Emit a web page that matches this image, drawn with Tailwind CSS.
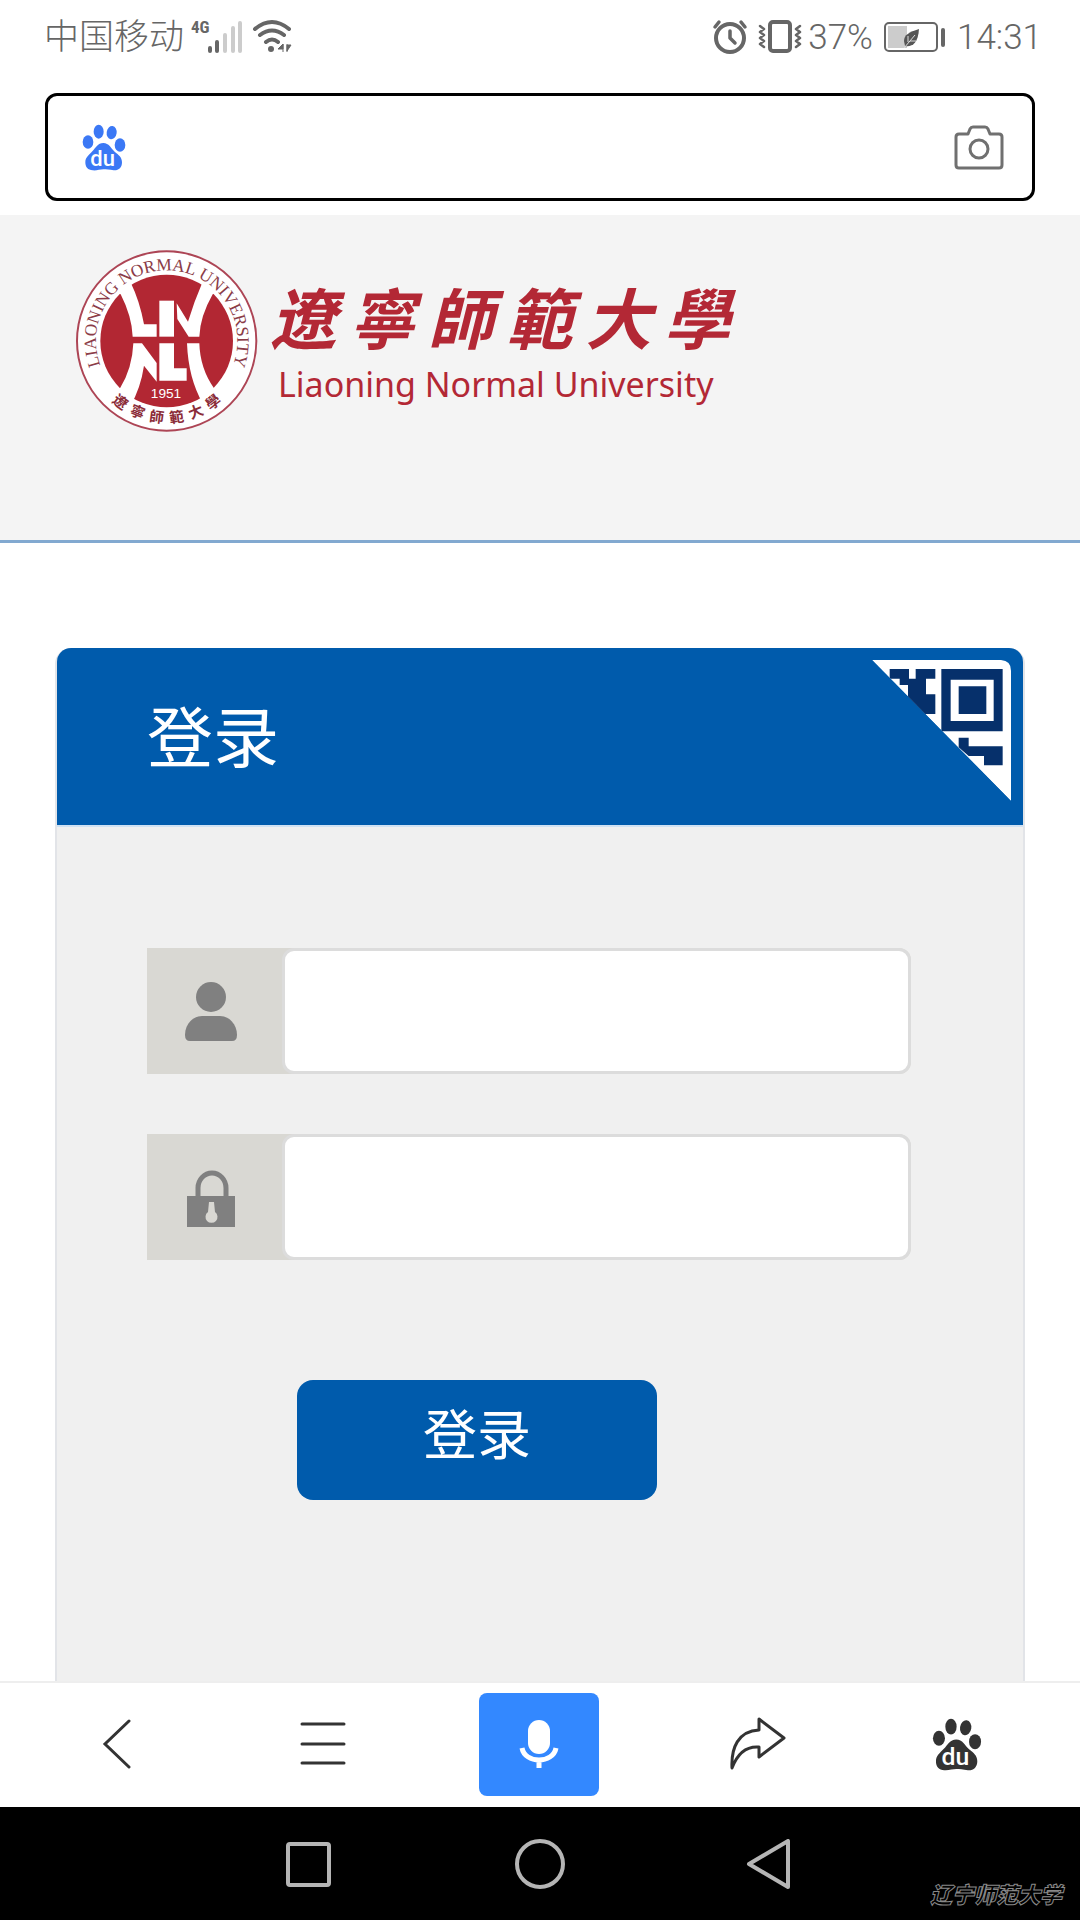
<!DOCTYPE html>
<html lang="zh-CN">
<head>
<meta charset="utf-8">
<meta name="viewport" content="width=device-width, initial-scale=1">
<title>辽宁师范大学 登录</title>
<script src="https://cdn.jsdelivr.net/npm/@tailwindcss/browser@4"></script>
</head>
<body class="flex min-h-screen flex-col bg-white font-['Roboto','Noto_Sans_CJK_SC',sans-serif] text-[#666]">

<svg class="hidden" aria-hidden="true">
  <symbol id="paw" viewBox="156 131 132 141">
    <g fill="currentColor">
      <ellipse cx="174" cy="185" rx="16" ry="20"/>
      <ellipse cx="206" cy="154" rx="15" ry="21"/>
      <ellipse cx="245" cy="157" rx="15" ry="20" transform="rotate(8 245 157)"/>
      <ellipse cx="270" cy="194" rx="16" ry="20"/>
      <path d="M220 188C237 188 243 204 254 214C266 224 276 230 276 246C276 262 266 271 251 270C238 268 229 267 220 267C211 267 200 271 188 270C174 269 166 261 166 246C166 231 176 225 187 213C197 203 203 188 220 188Z"/>
    </g>
    <text x="218" y="257" text-anchor="middle" font-family="Roboto, sans-serif" font-weight="500" font-size="66" fill="#fff">du</text>
  </symbol>
</svg>

<!-- Status bar -->
<header class="flex h-[76px] items-center justify-between pr-[38px] pl-11 text-[35px] font-light">
  <div class="flex items-center">
    <span>中国移动</span>
    <svg class="ml-1.5 h-10 w-28" viewBox="0 0 112 40" fill="none" aria-hidden="true">
      <text x="1" y="15" font-family="Roboto Condensed, Liberation Sans Narrow, Roboto, sans-serif" font-weight="700" font-size="17" fill="#666">4G</text>
      <g stroke-width="4" stroke-linecap="round">
        <path stroke="#666" d="M20 30v3M27 24v9"/>
        <path stroke="#ccc" d="M35 17v16M43 10v23M50 5v28"/>
      </g>
      <g stroke="#666" stroke-width="4" stroke-linecap="round">
        <path d="M65 11q17-14 34 0M70 17q12-9 24 0M76 24q6-5 12 0"/>
      </g>
      <circle cx="81" cy="31" r="3" fill="#666"/>
      <path d="M93 26v8M88 31l5-5v5zM97 26v8M97 33l4-6h-4z" fill="#666" stroke="#666" stroke-width="1"/>
    </svg>
  </div>
  <div class="flex items-center">
    <svg class="mr-1.5 h-10 w-[90px]" viewBox="0 0 90 40" fill="none" stroke="#666" stroke-linecap="round" stroke-linejoin="round" aria-hidden="true">
      <circle cx="18" cy="20" r="14" stroke-width="4"/>
      <path stroke-width="3.5" d="M18 13v7l5 5"/>
      <path stroke-width="3.5" d="M3 9l4-5M33 9l-4-5"/>
      <rect x="58" y="4" width="20" height="29" rx="3" stroke-width="4"/>
      <path stroke-width="2.5" d="M48 8l4 3-4 3 4 3-4 3 4 3-4 3 4 3M88 8l-4 3 4 3-4 3 4 3-4 3 4 3-4 3"/>
    </svg>
    <span>37%</span>
    <svg class="mx-2.5 h-8 w-[64px]" viewBox="0 0 64 32" aria-hidden="true">
      <rect x="2" y="1" width="52" height="28" rx="4" fill="#fff" stroke="#666" stroke-width="2"/>
      <rect x="5" y="4" width="19" height="22" fill="#ccc"/>
      <path d="M36 7C26 10 21 13 21 19l1 5c7 1 13-2 14-17z" fill="#555"/>
      <path d="M21 26l11-13M25 20v-6M27 19h6" stroke="#ddd" stroke-width="1"/>
      <rect x="58" y="6" width="4" height="19" rx="2" fill="#666"/>
    </svg>
    <time>14:31</time>
  </div>
</header>

<!-- Search box -->
<form class="px-[45px] pt-[17px] pb-[14px]">
  <div class="flex h-[108px] items-center rounded-xl border-3 border-black pr-7 pl-[34px]">
    <svg class="h-[47px] w-11 text-[#3b78f5]" aria-hidden="true"><use href="#paw"/></svg>
    <input type="search" aria-label="搜索" class="mx-5 h-full min-w-0 flex-1 text-4xl outline-none">
    <button type="button" aria-label="拍照搜索">
      <svg class="h-[46px] w-[50px]" viewBox="0 0 50 46" fill="none" stroke="#707070" stroke-width="3" stroke-linejoin="round" aria-hidden="true">
        <path d="M5 10h9l2-5q1-2 3-2h12q2 0 3 2l2 5h9q3 0 3 3v28q0 3-3 3H5q-3 0-3-3V13q0-3 3-3z"/>
        <circle cx="25" cy="25" r="9"/>
      </svg>
    </button>
  </div>
</form>

<main class="flex flex-1 flex-col">
  <!-- University banner -->
  <section class="flex h-[328px] items-start border-b-3 border-[#82a9d0] bg-[#f4f4f4] pt-5 pl-[60px]">
    <svg class="size-[210px] shrink-0" viewBox="0 0 630 630" role="img" aria-label="辽宁师范大学校徽">
      <defs>
        <path id="ring-top" d="M320 530A212 212 0 0 1 320 106A212 212 0 0 1 320 530"/>
        <path id="ring-bottom" d="M74 318A246 246 0 0 0 566 318"/>
      </defs>
      <circle cx="320" cy="318" r="269" fill="#fff" stroke="#ad4555" stroke-width="6"/>
      <circle cx="320" cy="318" r="199" fill="#b22733"/>
      <g fill="#fff">
        <path d="M182 178Q216 245 218 305H290V268H252Q240 200 211 140L170 120L150 165Z"/>
        <path d="M298 197H342V305H298Z"/>
        <path d="M350 205L384 260Q402 200 428 140L470 125L486 165L458 178Q420 245 418 305H386L352 252Z"/>
        <path d="M220 325H246L290 384V440L252 392Q242 460 210 515L160 500L150 465L180 460Q217 400 220 325Z"/>
        <path d="M298 325H342V400H380V437H298Z"/>
        <path d="M381 325H418Q420 400 462 460L486 480L450 520L428 505Q385 430 381 325Z"/>
        <text x="318" y="489" text-anchor="middle" font-family="Liberation Sans, sans-serif" font-size="41">1951</text>
      </g>
      <text font-family="Liberation Serif, serif" font-size="52" fill="#8b3c48" text-anchor="middle"><textPath href="#ring-top" startOffset="50%">LIAONING NORMAL UNIVERSITY</textPath></text>
      <text font-family="Noto Sans CJK TC, sans-serif" font-weight="700" font-size="44" fill="#8b2c38" text-anchor="middle"><textPath href="#ring-bottom" startOffset="50%">遼&#160; 寧&#160; 師&#160; 範&#160; 大&#160; 學</textPath></text>
    </svg>
    <div class="w-[460px] pt-8 text-[#b32835]">
      <h1 class="flex justify-between font-['Noto_Sans_CJK_TC',sans-serif] text-[66px] leading-[96px] font-bold italic">
        <span>遼</span><span>寧</span><span>師</span><span>範</span><span>大</span><span>學</span>
      </h1>
      <p class="pl-2 font-['Noto_Sans',sans-serif] text-[34px] leading-[42px] whitespace-nowrap">Liaoning Normal University</p>
    </div>
  </section>

  <!-- Login card -->
  <section class="mx-[55px] mt-[105px] flex flex-1 flex-col rounded-t-2xl border-x-2 border-[#e2e4e8] bg-[#f0f0f0]">
    <div class="relative flex h-[177px] items-center rounded-t-[14px] bg-[#005bac] pt-1.5 pl-[90px]">
      <h2 class="text-[66px] leading-[80px] text-white">登录</h2>
      <svg class="absolute top-3 right-3 h-[141px] w-[139px]" viewBox="97 90 417 423" role="img" aria-label="扫码登录">
        <defs><clipPath id="corner"><path d="M97 90H484Q514 92 514 122V513Z"/></clipPath></defs>
        <g clip-path="url(#corner)">
          <path fill="#fff" d="M97 90H514V513Z"/>
          <g fill="#06306b">
            <path fill-rule="evenodd" d="M305 117H489V304H305ZM333 149V273H462V149Z"/>
            <path d="M357 169H440V252H357Z"/>
            <path d="M150 117H208V146H228V117H287V146H259V193H287V252H250L205 205V165H180V146H150Z"/>
            <path d="M357 323H387V349H489V406H433V378H387L357 352Z"/>
          </g>
        </g>
      </svg>
    </div>
    <form class="flex flex-col border-t-2 border-[#cfe1f3] pt-[121px] pr-[112px] pb-[181px] pl-[90px]">
      <div class="flex h-[126px] rounded-r-xl bg-[#d9d8d3]">
        <label for="user" class="flex w-[135px] shrink-0 items-center justify-center pr-2">
          <svg class="h-[60px] w-[54px]" viewBox="0 0 54 60" fill="#808080" role="img" aria-label="用户名">
            <circle cx="27" cy="16" r="15"/>
            <path d="M1 54C1 42 10 35 18 35H36C45 35 53 43 53 54Q53 60 48 60H6Q1 60 1 54Z"/>
          </svg>
        </label>
        <input id="user" type="text" class="min-w-0 flex-1 rounded-xl border-3 border-[#dcdcdc] bg-white px-5 text-4xl outline-none">
      </div>
      <div class="mt-[60px] flex h-[126px] rounded-r-xl bg-[#d9d8d3]">
        <label for="pass" class="flex w-[135px] shrink-0 items-center justify-center pt-1 pr-2">
          <svg class="h-[58px] w-[50px]" viewBox="0 0 50 58" role="img" aria-label="密码">
            <path d="M12 28V18a14 15 0 0 1 28 0V28" fill="none" stroke="#808080" stroke-width="5"/>
            <path d="M1 26H49V57H1Z" fill="#808080"/>
            <path d="M23 32h5l1 10a6 6 0 1 1-7 0z" fill="#d9d8d3"/>
          </svg>
        </label>
        <input id="pass" type="password" class="min-w-0 flex-1 rounded-xl border-3 border-[#dcdcdc] bg-white px-5 text-4xl outline-none">
      </div>
      <button type="button" class="mt-[120px] ml-[150px] h-[120px] w-[360px] rounded-2xl bg-[#005bac] pb-1.5 text-[54px] leading-[64px] text-white">登录</button>
    </form>
  </section>
</main>

<!-- Browser toolbar -->
<nav class="grid h-[126px] grid-cols-[234fr_178fr_253fr_186fr_212fr_17fr] items-center border-t-2 border-[#eee] bg-white pb-0.5 text-[#333]">
  <button type="button" aria-label="返回" class="flex justify-center">
    <svg class="h-[50px] w-[30px]" viewBox="0 0 30 50" fill="none" stroke="currentColor" stroke-width="3" stroke-linecap="round"><path d="M27 2L3 25L27 48"/></svg>
  </button>
  <button type="button" aria-label="菜单" class="flex justify-center">
    <svg class="h-11 w-[46px]" viewBox="0 0 46 44" fill="none" stroke="currentColor" stroke-width="3" stroke-linecap="round"><path d="M2 2H44M2 22H44M2 41H44"/></svg>
  </button>
  <button type="button" aria-label="语音搜索" class="flex h-[103px] w-[120px] items-center justify-center justify-self-center rounded-lg bg-[#3388ff]">
    <svg class="h-12 w-10" viewBox="0 0 40 48" fill="none" stroke="#fff">
      <rect x="9" y="0" width="22" height="34" rx="11" fill="#fff" stroke="none"/>
      <path d="M3 28C6 44 34 44 37 28M20 40V48" stroke-width="5"/>
    </svg>
  </button>
  <button type="button" aria-label="分享" class="flex justify-center">
    <svg class="h-[54px] w-14" viewBox="0 0 56 54" fill="none" stroke="currentColor" stroke-width="3" stroke-linejoin="round"><path d="M29 2L54 21L29 40V30C17 29 8 35 2 51C1 31 8 14 29 13Z"/></svg>
  </button>
  <button type="button" aria-label="百度首页" class="flex justify-center">
    <svg class="h-[53px] w-[50px]"><use href="#paw"/></svg>
  </button>
</nav>

<!-- System navigation -->
<footer class="relative flex h-[113px] items-center justify-center gap-[180px] bg-black text-[#b5b5b5]">
  <button type="button" aria-label="最近任务">
    <svg class="size-[50px]" viewBox="0 0 50 50" fill="none" stroke="currentColor" stroke-width="4"><rect x="3" y="5" width="41" height="41" rx="2"/></svg>
  </button>
  <button type="button" aria-label="主屏幕">
    <svg class="size-[50px]" viewBox="0 0 50 50" fill="none" stroke="currentColor" stroke-width="4"><circle cx="25" cy="25" r="23"/></svg>
  </button>
  <button type="button" aria-label="系统返回">
    <svg class="size-[50px]" viewBox="0 0 50 50" fill="none" stroke="currentColor" stroke-width="4" stroke-linejoin="round"><path d="M43 2V48L4 25Z"/></svg>
  </button>
  <span class="absolute right-[18px] bottom-2 text-[22px] leading-8 font-black text-black italic [-webkit-text-stroke:1px_#888]">辽宁师范大学</span>
</footer>
</body>
</html>
